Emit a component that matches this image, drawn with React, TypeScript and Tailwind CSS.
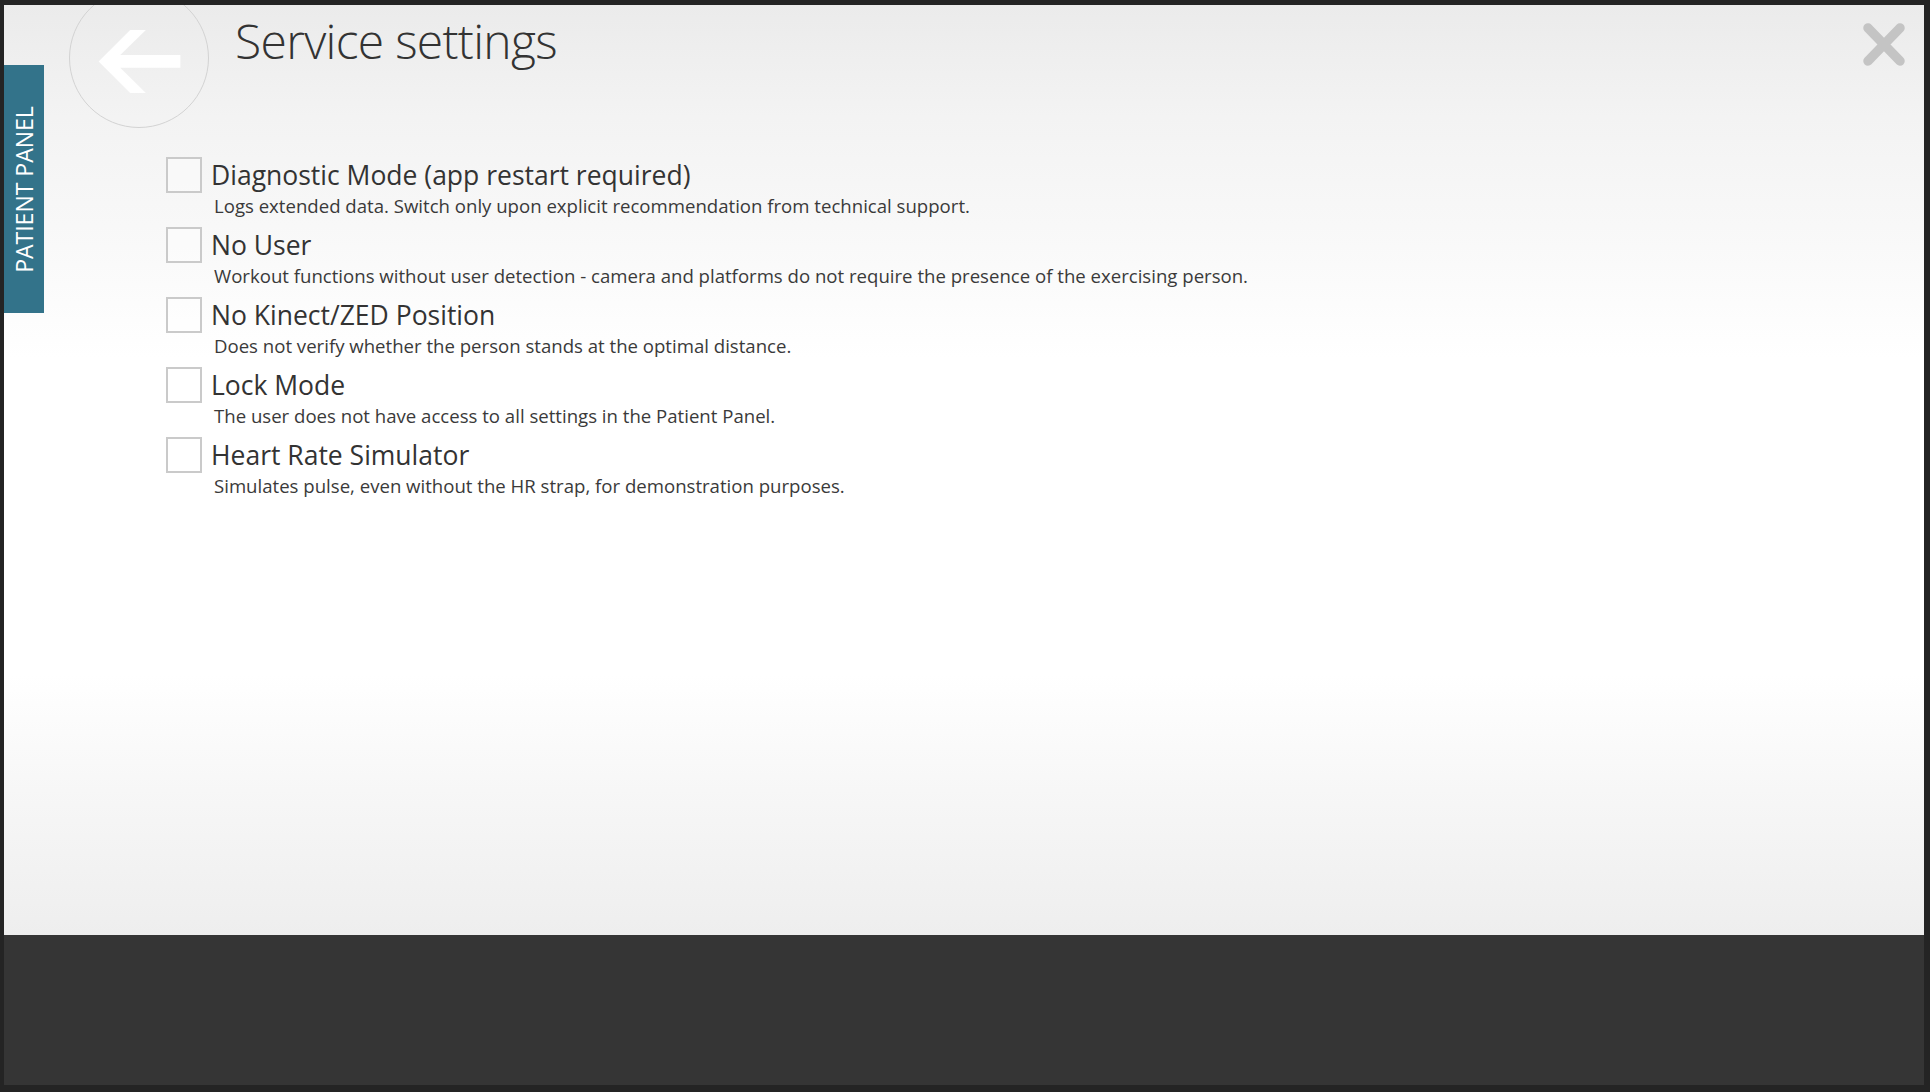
const options = [
  {
    label: 'Diagnostic Mode (app restart required)',
    hint: 'Logs extended data. Switch only upon explicit recommendation from technical support.',
  },
  {
    label: 'No User',
    hint: 'Workout functions without user detection - camera and platforms do not require the presence of the exercising person.',
  },
  {
    label: 'No Kinect/ZED Position',
    hint: 'Does not verify whether the person stands at the optimal distance.',
  },
  {
    label: 'Lock Mode',
    hint: 'The user does not have access to all settings in the Patient Panel.',
  },
  {
    label: 'Heart Rate Simulator',
    hint: 'Simulates pulse, even without the HR strap, for demonstration purposes.',
  },
]

export default function App() {
  return (
    <div className="flex h-screen w-full flex-col bg-[#242424] pt-[5px] pr-[6px] pb-[7px] pl-[4px] font-['Open_Sans','Noto_Sans',sans-serif] text-[#333333]">
      <div className="relative flex-1 overflow-hidden bg-[linear-gradient(to_bottom,#ebebeb_0%,#f3f3f3_12%,#f9f9f9_26%,#ffffff_38%,#ffffff_72%,#f6f6f6_86%,#eeeeee_100%)]">
        {/* side tab */}
        <div className="absolute top-[60px] left-0 flex h-[248px] w-[40px] items-center justify-center bg-[#33738a]">
          <span className="shrink-0 -rotate-90 whitespace-nowrap text-[23px] leading-none text-white">
            PATIENT PANEL
          </span>
        </div>

        {/* close */}
        <button type="button" className="absolute top-[17px] right-[18px] h-[45px] w-[44px]">
          <svg viewBox="0 0 44 45" className="h-full w-full">
            <path d="M6 6 L38 39 M38 6 L6 39" stroke="#c4c4c4" strokeWidth="9.5" strokeLinecap="round" />
          </svg>
        </button>

        <header className="-mt-[17px] flex items-start pl-[65px]">
          <button
            type="button"
            className="h-[140px] w-[140px] shrink-0 rounded-full border-[1.5px] border-[#d3d3d3]"
          >
            <svg viewBox="0 0 140 140" className="h-full w-full">
              <polygon
                points="29,73.5 61,41.5 77,41.5 51,67 112,67 112,80 51,80 77,105.5 61,105.5"
                fill="#ffffff"
              />
            </svg>
          </button>
          <h1 className="mt-[29px] ml-[26px] text-[48px] leading-[48px] font-light tracking-[-0.7px]">
            Service settings
          </h1>
        </header>

        <ul className="mt-[29px] flex flex-col pl-[162px]">
          {options.map((o) => (
            <li key={o.label} className="flex h-[70px] items-start">
              <span className="h-[36px] w-[36px] shrink-0 border-2 border-[#cacaca] bg-white/40" />
              <div className="ml-[9px] flex flex-col">
                <span className="text-[26.5px] leading-[36px]">{o.label}</span>
                <span className="mt-[2px] pl-[3px] text-[18.6px] leading-[22px] text-[#3a3a3a]">{o.hint}</span>
              </div>
            </li>
          ))}
        </ul>
      </div>
      <div className="h-[150px] bg-[#353535]" />
    </div>
  )
}
